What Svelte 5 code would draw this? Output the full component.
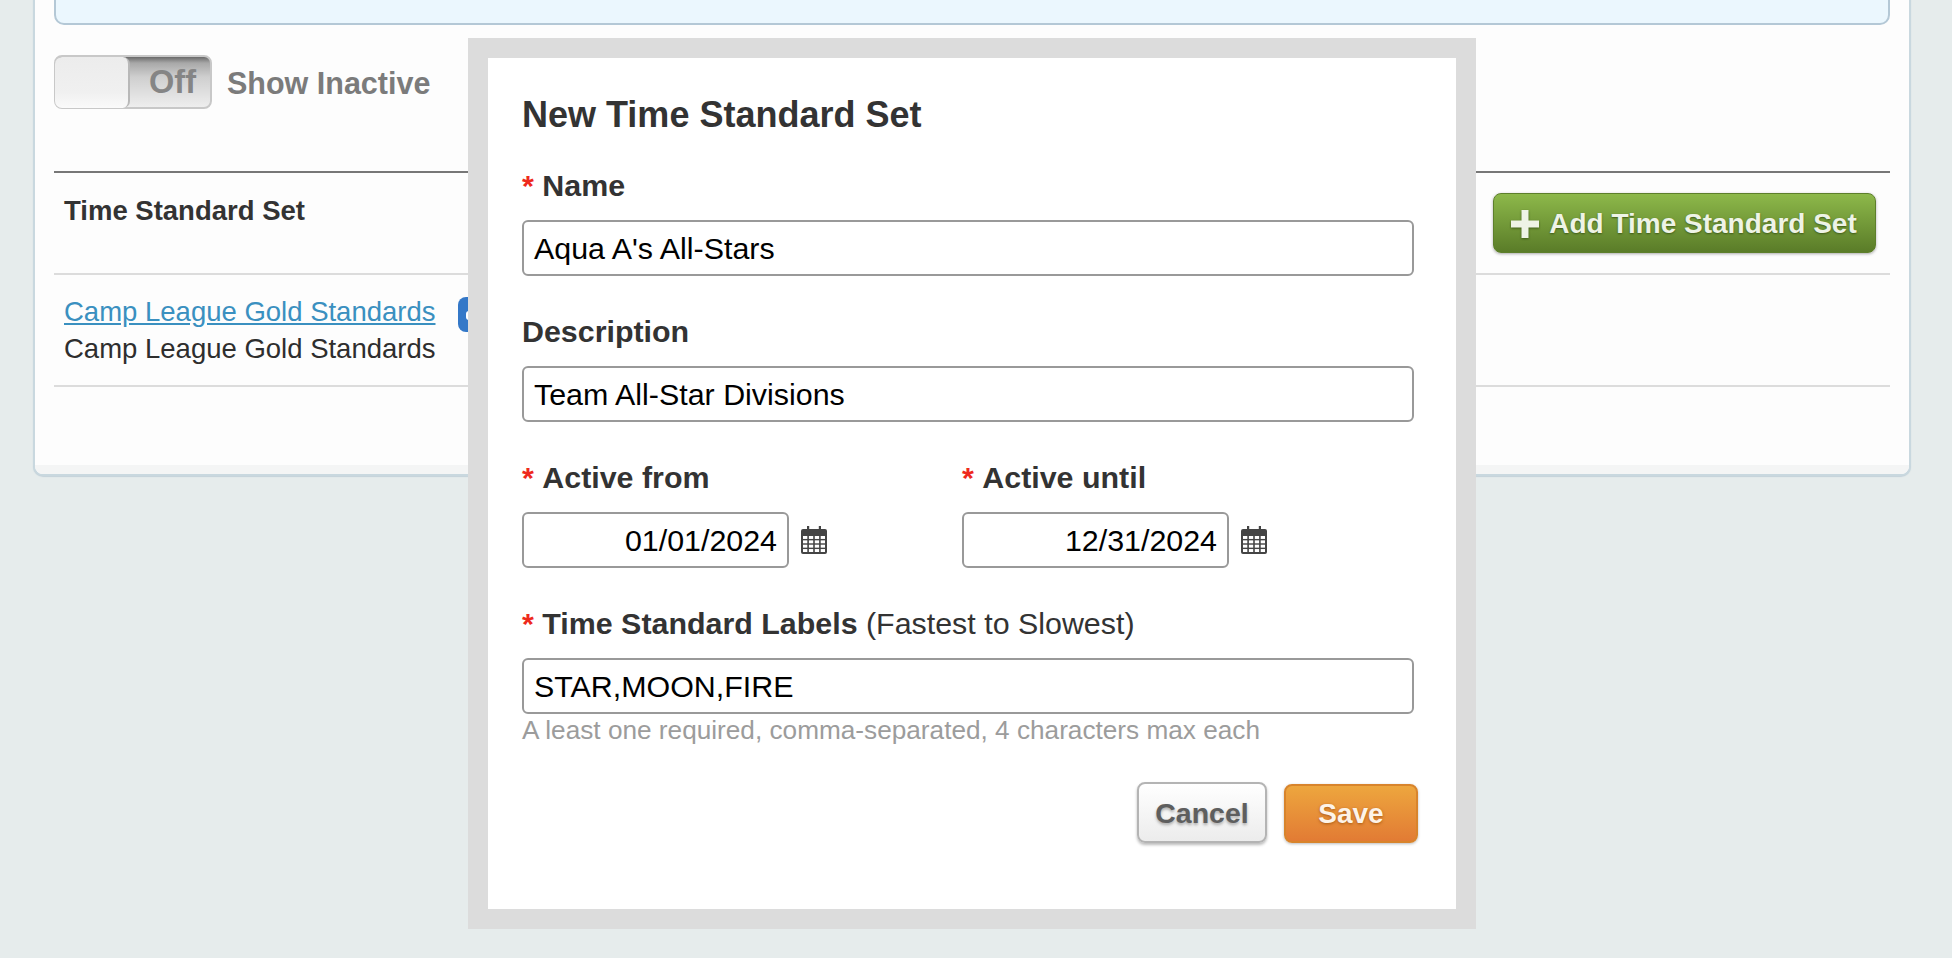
<script>
  const fields = { name: "Aqua A's All-Stars", desc: 'Team All-Star Divisions', labels: 'STAR,MOON,FIRE' };
  const calX = [2, 7.9, 13.8, 19.7];
  const calY = [10, 14.35, 18.7, 23.05];
</script>

<div class="page">
  <section class="card">
    <div class="info"></div>
    <div class="filter">
      <div class="toggle">
        <span class="knob"></span>
        <span class="off">Off</span>
      </div>
      <span class="show">Show Inactive</span>
    </div>
    <div class="thead">
      <strong>Time Standard Set</strong>
      <button class="btn add">
        <svg viewBox="0 0 28 28" width="28" height="28" aria-hidden="true"><path d="M10.500 0h7v10.500h10.500v7H17.500V28h-7V17.500H0v-7h10.500z" fill="currentColor"/></svg>
        Add Time Standard Set
      </button>
    </div>
    <div class="trow">
      <div class="rowtext">
        <a href="#top">Camp League Gold Standards</a>
        <div>Camp League Gold Standards</div>
      </div>
      <span class="badge"></span>
    </div>
    <div class="foot"></div>
  </section>

  <div class="modal">
    <h2>New Time Standard Set</h2>
    <div class="field">
      <span class="lab"><i>*</i> <b>Name</b></span>
      <div class="input">{fields.name}</div>
    </div>
    <div class="field">
      <span class="lab"><b>Description</b></span>
      <div class="input">{fields.desc}</div>
    </div>
    <div class="dates">
      {#each [['Active from', '01/01/2024'], ['Active until', '12/31/2024']] as d}
        <div class="field date">
          <span class="lab"><i>*</i> <b>{d[0]}</b></span>
          <div class="dateline">
            <div class="input right">{d[1]}</div>
            <svg class="cal" viewBox="0 0 26 28" width="26" height="28" aria-hidden="true">
              <path fill="#444" d="M2 3h4V0h2.200v3h9.600V0H20v3h4a2 2 0 0 1 2 2v21a2 2 0 0 1-2 2H2a2 2 0 0 1-2-2V5a2 2 0 0 1 2-2z"/>
              {#each calY as y}
                {#each calX as x}
                  <rect {x} {y} width="4.300" height="2.950" fill="#fff"/>
                {/each}
              {/each}
            </svg>
          </div>
        </div>
      {/each}
    </div>
    <div class="field last">
      <span class="lab"><i>*</i> <b>Time Standard Labels</b> (Fastest to Slowest)</span>
      <div class="input">{fields.labels}</div>
      <div class="hint">A least one required, comma-separated, 4 characters max each</div>
    </div>
    <div class="actions">
      <button class="btn cancel">Cancel</button>
      <button class="btn save">Save</button>
    </div>
  </div>
</div>

<style>
  :global(body) {
    margin: 0;
    background: #e6ecec;
    font-family: "Liberation Sans", Arial, sans-serif;
    color: #333;
    overflow: hidden;
  }
  .page {
    position: relative;
    height: 958px;
    overflow: hidden;
    padding: 0 41px 0 33px;
    box-sizing: border-box;
  }
  .card {
    margin-top: -39px;
    height: 515px;
    box-sizing: border-box;
    background: #fdfdfd;
    border-style: solid;
    border-color: #c9d8df;
    border-width: 0 2px 2px 2px;
    border-radius: 0 0 10px 10px;
    box-shadow: 0 1px 1px #c4d2da;
    display: flex;
    flex-direction: column;
    padding: 0 19px;
    position: relative;
    overflow: hidden;
  }
  .info {
    height: 64px;
    flex: none;
    background: #ebf7fe;
    border: 2px solid #b4c8d6;
    border-radius: 10px;
    box-sizing: border-box;
  }
  .filter {
    height: 116px;
    margin-top: 30px;
    display: flex;
    align-items: flex-start;
    gap: 15px;
    flex: none;
  }
  .toggle {
    width: 158px;
    height: 54px;
    box-sizing: border-box;
    border-radius: 8px;
    border: 2px solid #c8c8c8;
    position: relative;
    background: linear-gradient(#6a6a6a 0, #a8a8a8 12%, #cfcfcf 40%, #eee 100%);
    display: flex;
    align-items: center;
    justify-content: flex-end;
  }
  .knob {
    position: absolute;
    left: -1px;
    top: 0;
    bottom: -1px;
    width: 75px;
    background: linear-gradient(#ececec, #f0f0f0 70%, #fafafa);
    border-radius: 7px;
    border-right: 2px solid #b8b8b8;
    box-sizing: border-box;
  }
  .off {
    font-size: 32.500px;
    font-weight: 700;
    color: #858585;
    margin-right: 14px;
  }
  .show {
    font-size: 30.500px;
    font-weight: 700;
    color: #7b7b7b;
    line-height: 56px;
  }
  .thead {
    height: 104px;
    flex: none;
    box-sizing: border-box;
    border-top: 2px solid #777;
    border-bottom: 2px solid #dcdcdc;
    display: flex;
    align-items: flex-start;
    justify-content: space-between;
    padding: 20px 14px 0 10px;
  }
  .thead strong {
    font-size: 27.500px;
    line-height: 36px;
    color: #333;
  }
  .btn {
    font-family: inherit;
    font-weight: 700;
    font-size: 28px;
    box-sizing: border-box;
    border-radius: 8px;
    display: flex;
    align-items: center;
    justify-content: center;
    padding: 0;
  }
  .add {
    width: 383px;
    height: 60px;
    padding: 2px 1px 0 0;
    color: #eef3e6;
    gap: 10px;
    border: 1px solid #5d7f2b;
    background: linear-gradient(#8db84a, #5a7c28);
    box-shadow: 0 1px 3px #aaa;
    text-shadow: 0 1px 2px #3e5a18;
  }
  .add svg {
    filter: drop-shadow(0 1px 1px #3e5a18);
  }
  .trow {
    height: 112px;
    flex: none;
    box-sizing: border-box;
    border-bottom: 2px solid #dcdcdc;
    padding: 18px 10px 0;
    display: flex;
    gap: 22px;
    font-size: 27.500px;
    line-height: 37px;
    color: #2e2e2e;
  }
  .rowtext a {
    color: #3a90c0;
    text-decoration: underline;
    display: block;
  }
  .badge {
    width: 60px;
    height: 35px;
    margin-top: 4px;
    border-radius: 8px;
    background: #3478c8;
    position: relative;
  }
  .badge::before {
    content: "";
    position: absolute;
    left: 8px;
    top: 14px;
    width: 6px;
    height: 9px;
    border-radius: 3px;
    background: #fff;
  }
  .foot {
    position: absolute;
    left: 0;
    right: 0;
    bottom: 0;
    height: 9px;
    background: #f4f5f5;
  }
  .modal {
    position: absolute;
    left: 468px;
    top: 38px;
    width: 1008px;
    height: 891px;
    box-sizing: border-box;
    background: #fff;
    border: 20px solid #dcdcdc;
    padding: 36px 42px 0 34px;
  }
  h2 {
    margin: 0 0 34px;
    font-size: 36px;
    line-height: 42px;
    color: #333;
    font-weight: 700;
  }
  .field {
    display: flex;
    flex-direction: column;
    margin-bottom: 40px;
  }
  .lab {
    font-size: 30.400px;
    line-height: 30px;
    margin-bottom: 20px;
    color: #333;
  }
  .lab i {
    color: #ee2a1c;
    font-style: normal;
    font-weight: 700;
  }
  .input {
    height: 56px;
    box-sizing: border-box;
    border: 2px solid #999;
    border-radius: 6px;
    padding: 0 10px;
    font-size: 30.400px;
    line-height: 53px;
    color: #000;
    background: #fff;
  }
  .right {
    text-align: right;
    width: 267px;
  }
  .dates {
    display: flex;
  }
  .date {
    width: 440px;
  }
  .dateline {
    display: flex;
    align-items: center;
    gap: 12px;
  }
  .last {
    margin-bottom: 0;
  }
  .hint {
    font-size: 26.200px;
    line-height: 28px;
    margin-top: 2px;
    color: #9c9c9c;
  }
  .actions {
    display: flex;
    justify-content: flex-end;
    align-items: flex-start;
    gap: 17px;
    margin-top: 38px;
    margin-right: -4px;
  }
  .cancel {
    width: 130px;
    height: 61px;
    padding-top: 2px;
    font-size: 28.500px;
    color: #5e5e5e;
    border: 2px solid #b4b4b4;
    background: linear-gradient(#fff, #ececec);
    box-shadow: 0 2px 3px #bbb;
    text-shadow: 0 2px 3px #aaa;
  }
  .save {
    width: 134px;
    height: 59px;
    margin-top: 2px;
    padding-top: 1px;
    color: #fdf3e8;
    border: 2px solid #d8842c;
    background: linear-gradient(#eda63e, #e27b34);
    box-shadow: 0 1px 3px #bbb;
    text-shadow: 0 1px 3px #a85a14;
  }
</style>
